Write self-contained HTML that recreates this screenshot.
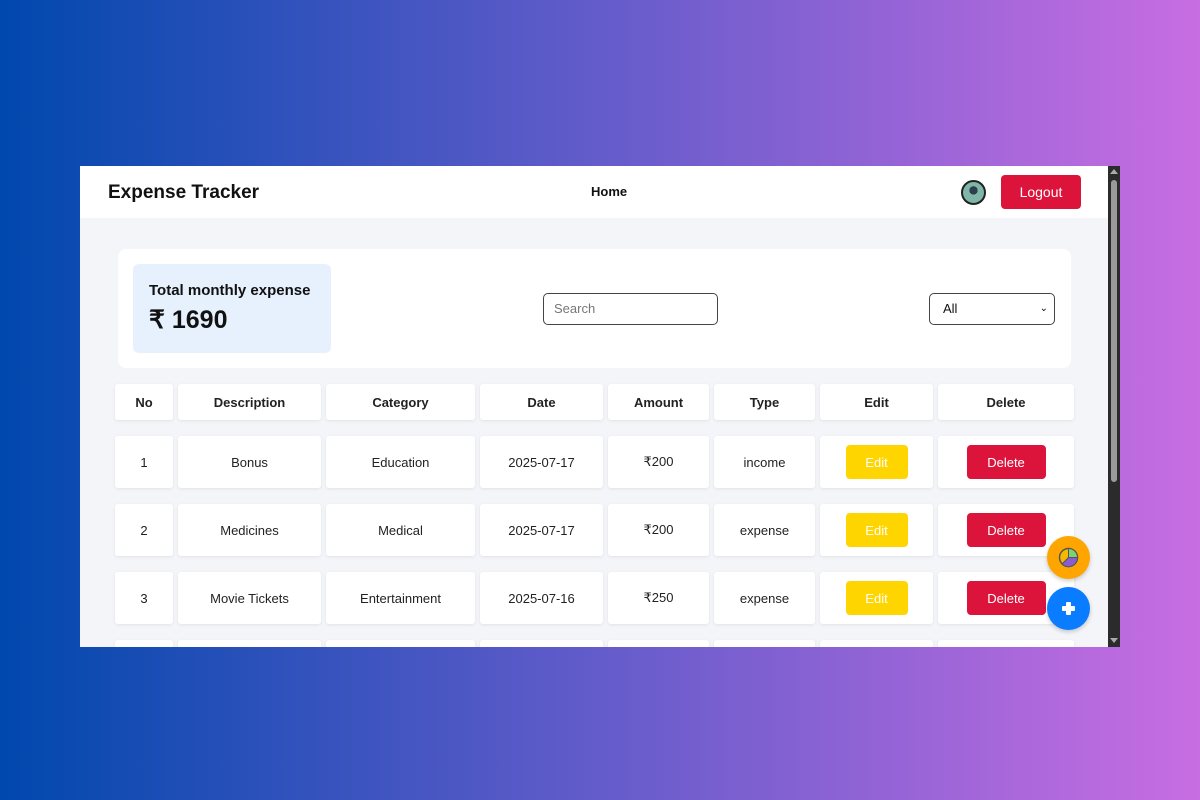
<!DOCTYPE html>
<html><head><meta charset="utf-8"><style>
*{box-sizing:border-box;margin:0;padding:0}
body{width:1200px;height:800px;overflow:hidden;background:linear-gradient(90deg,#0048ad 0%,#5a5ac8 45%,#c86de2 100%);font-family:"Liberation Sans",sans-serif;position:relative}
.win{position:absolute;left:80px;top:166px;width:1040px;height:481px;background:#f4f5f9;overflow:hidden}
.nav{position:absolute;left:0;top:0;width:1028px;height:52px;background:#fff}
.a{position:absolute}
.sb{position:absolute;left:1028px;top:0;width:12px;height:481px;background:#2b2b2b}
.th{position:absolute;top:218px;height:36px;background:#fff;border-radius:3px;box-shadow:0 1px 3px rgba(0,0,0,.08);font-size:13px;font-weight:bold;color:#222;display:flex;align-items:center;justify-content:center}
.td{position:absolute;height:52px;background:#fff;border-radius:3px;box-shadow:0 1px 3px rgba(0,0,0,.08);font-size:13px;color:#222;display:flex;align-items:center;justify-content:center}
.eb{width:62px;height:34px;background:#ffd500;color:#fff;border-radius:4px;display:flex;align-items:center;justify-content:center;font-size:13px}
.db{width:79px;height:34px;background:#dc143c;color:#fff;border-radius:4px;display:flex;align-items:center;justify-content:center;font-size:13px}
</style></head><body>
<div class="win">
<div class="nav">
<div class="a" style="left:28px;top:16px;font-size:19px;font-weight:bold;color:#111">Expense Tracker</div>
<div class="a" style="left:511px;top:18px;font-size:13px;font-weight:bold;color:#111">Home</div>
<div class="a" style="left:881px;top:14px;width:25px;height:25px;border-radius:50%;border:2px solid #222;background:radial-gradient(circle at 50% 40%,#2c3e50 0 25%,#7fb6a8 26%)"></div>
<div class="a" style="left:921px;top:9px;width:80px;height:34px;background:#dc143c;border-radius:4px;color:#fff;font-size:14px;display:flex;align-items:center;justify-content:center">Logout</div>
</div>
<div class="a" style="left:38px;top:83px;width:953px;height:119px;background:#fff;border-radius:8px"></div>
<div class="a" style="left:53px;top:98px;width:198px;height:89px;background:#e6f1fd;border-radius:6px"></div>
<div class="a" style="left:69px;top:116px;font-size:15px;font-weight:bold;color:#111">Total monthly expense</div>
<div class="a" style="left:69px;top:139px;font-size:25px;font-weight:bold;color:#111">₹ 1690</div>
<div class="a" style="left:463px;top:127px;width:175px;height:32px;border:1px solid #444;border-radius:5px;padding-left:10px;font-size:13px;color:#777;line-height:30px">Search</div>
<div class="a" style="left:849px;top:127px;width:126px;height:32px;border:1px solid #444;border-radius:5px;padding-left:13px;font-size:13px;color:#111;line-height:30px">All<span style="position:absolute;right:6px;top:0;font-size:10px">&#8964;</span></div>
<div class="th" style="left:35px;width:58px">No</div>
<div class="th" style="left:98px;width:143px">Description</div>
<div class="th" style="left:246px;width:149px">Category</div>
<div class="th" style="left:400px;width:123px">Date</div>
<div class="th" style="left:528px;width:101px">Amount</div>
<div class="th" style="left:634px;width:101px">Type</div>
<div class="th" style="left:740px;width:113px">Edit</div>
<div class="th" style="left:858px;width:136px">Delete</div>
<div style="position:absolute;left:0;top:270px">
<div class="td" style="left:35px;width:58px">1</div><div class="td" style="left:98px;width:143px">Bonus</div><div class="td" style="left:246px;width:149px">Education</div><div class="td" style="left:400px;width:123px">2025-07-17</div><div class="td" style="left:528px;width:101px">₹200</div><div class="td" style="left:634px;width:101px">income</div><div class="td" style="left:740px;width:113px"><div class="eb">Edit</div></div><div class="td" style="left:858px;width:136px"><div class="db">Delete</div></div>
</div>
<div style="position:absolute;left:0;top:338px">
<div class="td" style="left:35px;width:58px">2</div><div class="td" style="left:98px;width:143px">Medicines</div><div class="td" style="left:246px;width:149px">Medical</div><div class="td" style="left:400px;width:123px">2025-07-17</div><div class="td" style="left:528px;width:101px">₹200</div><div class="td" style="left:634px;width:101px">expense</div><div class="td" style="left:740px;width:113px"><div class="eb">Edit</div></div><div class="td" style="left:858px;width:136px"><div class="db">Delete</div></div>
</div>
<div style="position:absolute;left:0;top:406px">
<div class="td" style="left:35px;width:58px">3</div><div class="td" style="left:98px;width:143px">Movie Tickets</div><div class="td" style="left:246px;width:149px">Entertainment</div><div class="td" style="left:400px;width:123px">2025-07-16</div><div class="td" style="left:528px;width:101px">₹250</div><div class="td" style="left:634px;width:101px">expense</div><div class="td" style="left:740px;width:113px"><div class="eb">Edit</div></div><div class="td" style="left:858px;width:136px"><div class="db">Delete</div></div>
</div>
<div style="position:absolute;left:0;top:474px">
<div class="td" style="left:35px;width:58px"></div><div class="td" style="left:98px;width:143px"></div><div class="td" style="left:246px;width:149px"></div><div class="td" style="left:400px;width:123px"></div><div class="td" style="left:528px;width:101px"></div><div class="td" style="left:634px;width:101px"></div><div class="td" style="left:740px;width:113px"></div><div class="td" style="left:858px;width:136px"></div>
</div>
<div class="a" style="left:967px;top:370px;width:43px;height:43px;border-radius:50%;background:#ffa500;box-shadow:0 2px 4px rgba(0,0,0,.2)">
<svg width="43" height="43" viewBox="0 0 43 43"><circle cx="21.5" cy="21.5" r="9" fill="#f6b800" stroke="#555" stroke-width="1.5"/><path d="M21.5 21.5V12.5A9 9 0 0 1 30.5 21.5Z" fill="#7dd36f" stroke="#555" stroke-width="1"/><path d="M21.5 21.5H30.5A9 9 0 0 1 15 28Z" fill="#8a5cd0" stroke="#555" stroke-width="1"/></svg></div>
<div class="a" style="left:967px;top:421px;width:43px;height:43px;border-radius:50%;background:#0a7cff;box-shadow:0 2px 4px rgba(0,0,0,.2)">
<div class="a" style="left:15px;top:19px;width:13px;height:5px;background:#fff;border-radius:1px"></div><div class="a" style="left:19px;top:15px;width:5px;height:13px;background:#fff;border-radius:1px"></div></div>
<div class="sb">
<div class="a" style="left:2px;top:3px;width:0;height:0;border-left:4px solid transparent;border-right:4px solid transparent;border-bottom:5px solid #aaa"></div>
<div class="a" style="left:3px;top:14px;width:6px;height:302px;background:#9a9a9a;border-radius:3px"></div>
<div class="a" style="left:2px;top:472px;width:0;height:0;border-left:4px solid transparent;border-right:4px solid transparent;border-top:5px solid #aaa"></div>
</div>
</div>
</body></html>
